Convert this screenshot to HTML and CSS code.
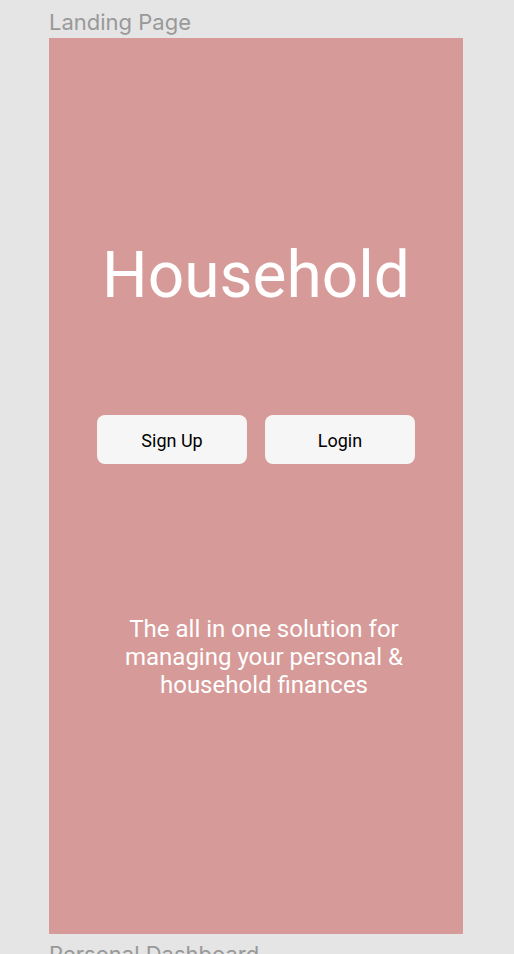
FILE: index.html
```html
<!DOCTYPE html>
<html>
<head>
<meta charset="utf-8">
<link rel="stylesheet" href="styles.css">
</head>
<body>
<div class="canvas">
  <div class="label">Landing Page</div>
  <div class="frame">
    <h1 class="title">Household</h1>
    <div class="actions">
      <button class="btn">Sign Up</button>
      <button class="btn">Login</button>
    </div>
    <p class="tagline">The all in one solution for<br>managing your personal &amp;<br>household finances</p>
  </div>
  <div class="label next">Personal Dashboard</div>
</div>
</body>
</html>
```
FILE: styles.css
```css
html, body {
  margin: 0;
  padding: 0;
  background: #e5e5e5;
  overflow: hidden;
}
.canvas {
  padding-left: 49px;
  padding-top: 10px;
  display: flex;
  flex-direction: column;
}
.label {
  font-family: Inter, "Noto Sans", sans-serif;
  font-size: 22px;
  line-height: 24px;
  color: #999999;
  height: 28px;
}
.label.next {
  margin-top: 8px;
}
.frame {
  width: 414px;
  height: 896px;
  background: #d69a98;
  display: flex;
  flex-direction: column;
  align-items: center;
  font-family: Roboto, "Liberation Sans", sans-serif;
}
.title {
  margin: 200px 0 0;
  font-weight: 400;
  font-size: 64px;
  line-height: 75px;
  color: #ffffff;
}
.actions {
  margin-top: 102px;
  display: flex;
  gap: 18px;
}
.btn {
  width: 150px;
  height: 49px;
  border: none;
  border-radius: 8px;
  background: #f6f6f6;
  font-family: Roboto, "Liberation Sans", sans-serif;
  font-size: 18px;
  color: #000000;
  padding: 2px 0 0;
}
.tagline {
  margin: 151px 0 0 16px;
  font-size: 24px;
  line-height: 28px;
  color: #ffffff;
  text-align: center;
}
```
